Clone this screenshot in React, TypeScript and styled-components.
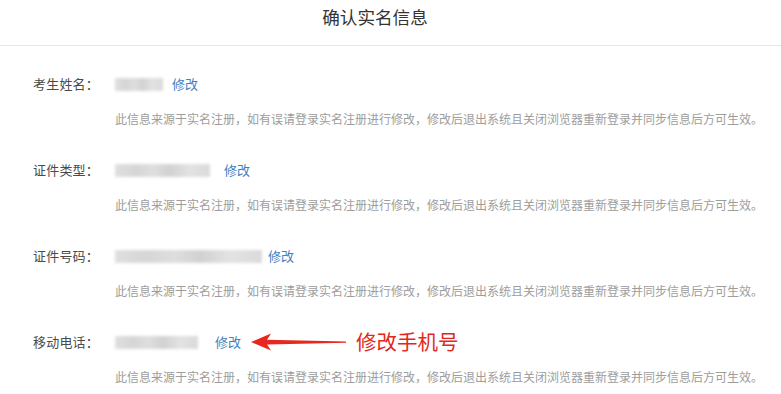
import React from "react";
import styled, { createGlobalStyle } from "styled-components";

const GlobalStyle = createGlobalStyle`
  html, body {
    margin: 0;
    padding: 0;
    background: #ffffff;
  }
  body {
    font-family: "Noto Sans CJK SC", "Noto Sans", sans-serif;
    color: #444;
  }
`;

const Page = styled.div`
  width: 781px;
  height: 394px;
  overflow: hidden;
  background: #fff;
`;

const Header = styled.header`
  height: 46px;
  box-sizing: border-box;
  border-bottom: 1px solid #e6e6e6;
  padding: 4px 31px 0 0;
  display: flex;
  justify-content: center;
`;

const Title = styled.h1`
  margin: 0;
  font-size: 17.6px;
  line-height: 26px;
  font-weight: 400;
  color: #333;
`;

const List = styled.div`
  display: flex;
  flex-direction: column;
  gap: 27px;
  padding: 24px 0 0 33px;
`;

const Item = styled.div`
  display: grid;
  grid-template-columns: 82px 1fr;
  grid-template-rows: 28px 20px;
  row-gap: 11px;
`;

const Label = styled.div`
  font-size: 13px;
  line-height: 28px;
  color: #4a4a4a;
  letter-spacing: 0.2px;
`;

const ValueLine = styled.div`
  display: flex;
  align-items: center;
  height: 28px;
`;

const Blurred = styled.div<{ $w: number }>`
  width: ${(p) => p.$w}px;
  height: 13px;
  background:
    linear-gradient(90deg, #dadada 0%, #cfcfcf 22%, #d9d9d9 40%, #cacaca 58%, #dedede 78%, #d4d4d4 100%);
  filter: blur(1.4px);
  opacity: 0.85;
`;

const EditLink = styled.a<{ $gap: number }>`
  margin-left: ${(p) => p.$gap}px;
  font-size: 13px;
  line-height: 28px;
  color: #3f7fc2;
  text-decoration: none;
  cursor: pointer;
`;

const Desc = styled.div`
  grid-column: 2;
  font-size: 12px;
  letter-spacing: 0;
  line-height: 20px;
  color: #9d9d9d;
  white-space: nowrap;
`;

const ArrowWrap = styled.span`
  display: flex;
  align-items: center;
  margin-left: 10px;
  margin-top: -1px;
`;

const Note = styled.span`
  margin-left: 9px;
  font-size: 20.5px;
  line-height: 28px;
  color: #e2271d;
  margin-top: -2px;
`;

const DESC =
  "此信息来源于实名注册，如有误请登录实名注册进行修改，修改后退出系统且关闭浏览器重新登录并同步信息后方可生效。";

const rows = [
  { label: "考生姓名：", w: 48, gap: 9 },
  { label: "证件类型：", w: 95, gap: 14 },
  { label: "证件号码：", w: 147, gap: 6 },
  { label: "移动电话：", w: 83, gap: 17, note: true },
];

const Arrow = () => (
  <svg width="96" height="18" viewBox="0 0 96 18">
    <polygon
      points="0,9 20,0.5 16,6.8 95,8.4 95,9.8 16,11.4 20,17.5"
      fill="#e8281e"
    />
  </svg>
);

export default function App() {
  return (
    <Page>
      <GlobalStyle />
      <Header>
        <Title>确认实名信息</Title>
      </Header>
      <List>
        {rows.map((r) => (
          <Item key={r.label}>
            <Label>{r.label}</Label>
            <ValueLine>
              <Blurred $w={r.w} />
              <EditLink $gap={r.gap}>修改</EditLink>
              {r.note && (
                <>
                  <ArrowWrap>
                    <Arrow />
                  </ArrowWrap>
                  <Note>修改手机号</Note>
                </>
              )}
            </ValueLine>
            <Desc>{DESC}</Desc>
          </Item>
        ))}
      </List>
    </Page>
  );
}
